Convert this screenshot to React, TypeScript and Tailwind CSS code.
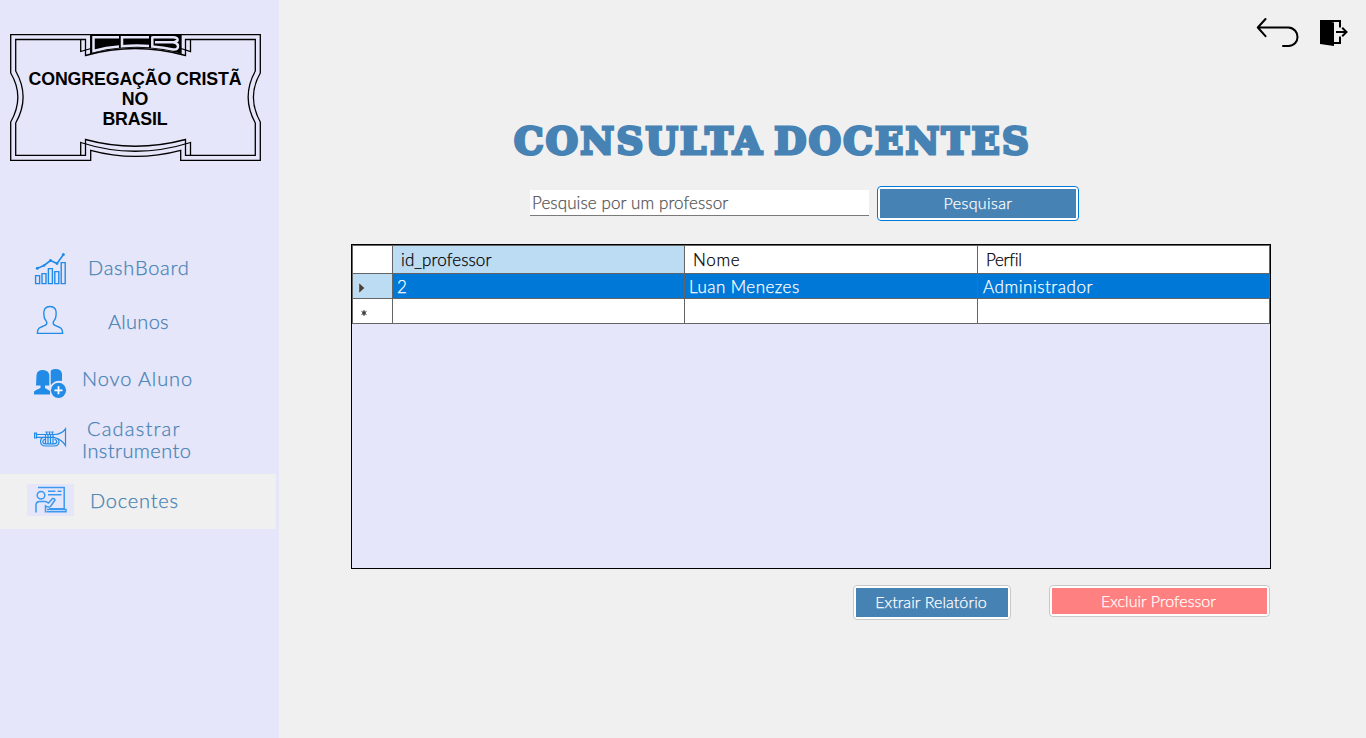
import type { ReactNode } from "react";

const thin = "font-['Lato'] font-light [-webkit-text-stroke:0.25px_currentColor]";

function Logo() {
  return (
    <svg width="279" height="170" viewBox="0 0 279 170" className="block shrink-0" fill="none" stroke="#000" strokeWidth="1.3">
      <path d="M91 34.7V53.5Q135 42 181 53.5V34.700Z" fill="#000" stroke="none" />
      <path d="M119 37.300H93.500V51Q106 47.300 119 46.500M149 37.300H122V46.300Q136 44.800 149 46M152.300 36.500V46.500Q164 47.500 173 49.500Q178.500 50 178 45.500Q177 42.500 173 42.300H155M152.300 37.300H173Q178.500 37.500 177.500 40.500L174 42.300" stroke="#e6e6fa" strokeWidth="2.500" />
      <path d="M10.700 34.700H260.300V73Q246.500 97 260.300 122V160.300H180.700V150.300Q135 162.500 90.700 150.300V160.300H10.700V122Q25 97 10.700 73Z" />
      <path d="M15.700 39.500H85.500V55.500Q135 41.500 185.500 55.500V39.500H255.300V71Q241 97 255.300 123V155.300H185.500V139.500Q135 153 85.500 139.500V155.300H15.700V123Q30.500 97 15.700 71Z" />
      <path d="M80.700 39.500V51.500L91 48.500M190.500 39.500V51.500L181 48.500M80.700 155.300V142.500Q135 160 190.500 142.500V155.300M90.700 35V54M181 35V54" />
      <g fill="#000" stroke="none" textAnchor="middle" fontFamily="Liberation Sans, Arial, sans-serif" fontWeight="700" fontSize="17.800">
        <text x="135" y="85" textLength="213">CONGREGAÇÃO CRISTÃ</text>
        <text x="135" y="105">NO</text>
        <text x="135" y="125" textLength="65">BRASIL</text>
      </g>
    </svg>
  );
}

function ChartIcon() {
  return (
    <svg width="34" height="34" viewBox="0 0 34 34" fill="none" stroke="#228be6" strokeWidth="1.400">
      <path d="M1.600 23.600h4v8h-4zM8 21.600h4v10H8zM14.400 16.600h4v15h-4zM20.800 19.600h4v12h-4zM27.200 10.600h4v21h-4z" />
      <path d="M3 16.500L10 13.500L16.500 8.500L23 11.500L29.500 2.500" strokeWidth="1.600" />
      <g fill="#228be6" stroke="none"><circle cx="3.300" cy="16.300" r="1.500" /><circle cx="10" cy="13.500" r="1.300" /><circle cx="16.500" cy="8.500" r="1.500" /><circle cx="23" cy="11.500" r="1.400" /><circle cx="29.300" cy="2.500" r="1.500" /></g>
    </svg>
  );
}

function PersonIcon() {
  return (
    <svg width="28" height="30" viewBox="0 0 28 30" fill="none" stroke="#228be6" strokeWidth="1.400" strokeLinejoin="round">
      <path d="M14 1.500C9.500 1.500 7.500 4.500 7.800 8.500L8.300 12.500C8.700 14.700 10.500 15.500 10.800 17.500C11 19.500 10.300 20 8.500 20.700C4.500 22.300 1.500 22.500 1.300 28.400H26.700C26.500 22.500 23.500 22.300 19.500 20.700C17.700 20 17 19.500 17.200 17.500C17.500 15.500 19.300 14.700 19.700 12.500L20.200 8.500C20.500 4.500 18.500 1.500 14 1.500Z" />
    </svg>
  );
}

function AddPeopleIcon() {
  return (
    <svg width="34" height="32" viewBox="0 0 34 32" fill="#228be6">
      <path d="M2 17.500L2.500 7Q3 2 9 2Q14.800 2.300 15.300 7V17.500H11V20L16 23V26.500H0V23.500Q2 21.500 6.500 20V17.500Z" />
      <path d="M16.700 14.500V4.500Q16 1 21.500 1Q27.500 1 28 6V13Q21 11.500 17 17Z" />
      <circle cx="24.500" cy="22.300" r="7.600" />
      <path d="M24.500 18.300V26.300M20.500 22.300H28.500" stroke="#fff" strokeWidth="1.800" />
    </svg>
  );
}

function TrumpetIcon() {
  return (
    <svg width="34" height="22" viewBox="0 0 34 22" fill="none" stroke="#228be6" strokeWidth="1.200">
      <path d="M.600 6.200H2.500V11H.600ZM2.500 7.500H20Q28 7 31.500 1.800V18.500Q28 12.500 20 10.300H2.500" />
      <path d="M10 10.300Q6.500 10.700 6.500 14.500Q6.700 19 11.500 19H20Q25 19 25 14.500Q25 12 23 11.300M11 12.300Q8.800 12.700 8.800 14.600Q9 16.800 11.500 16.900H20Q22.800 16.700 22.800 14.500Q22.500 12.500 20.500 12.300" />
      <path d="M11.500 7.500V16.900M14 7.500V16.900M16.500 7.500V16.900M19 7.500V16.900M12.700 5.500V7.500M15.500 5.500V7.500M18.300 5.500V7.500M11.300 5H13.800M14.300 5H16.800M17.300 5H19.800" />
    </svg>
  );
}

function TeacherIcon() {
  return (
    <svg width="32" height="28" viewBox="0 0 32 28" fill="none" stroke="#3b9af0" strokeWidth="1.500">
      <path d="M3 1.500H29.200V22.700H14M11.500 25.800H31V23.500H12" />
      <path d="M13 5.300H20.500M22.500 5.300H26.500M13 8.700H26.500" />
      <circle cx="6" cy="9.200" r="3.800" />
      <path d="M1 26.500V18.500Q1.300 15.500 4.500 15.400H10.500L13.500 17L17.500 12.500Q19.700 12.300 20 14L15.500 20.500Q14 22 10.500 19.800V26.500" />
    </svg>
  );
}

function BackIcon() {
  return (
    <svg width="44" height="32" viewBox="0 0 44 32" fill="none" stroke="#000" strokeWidth="2" strokeLinecap="round" strokeLinejoin="round">
      <path d="M9.500 2L1.800 10.500L9.500 19.200M2 10.500H32.500C44.500 11.500 44.500 28.500 32.500 29H27" />
    </svg>
  );
}

function ExitIcon() {
  return (
    <svg width="30" height="28" viewBox="0 0 30 28" fill="none" stroke="#000" strokeWidth="2">
      <path d="M1 1L15 3.500V27L1 25Z" fill="#000" stroke="none" />
      <path d="M1 2H21V8.500M21 17.500V24H15M17 13H27M23.200 8.700L27.500 13L23.200 17.300" />
    </svg>
  );
}

function NavItem({ icon, iconClass, label, labelClass, className }: { icon: ReactNode; iconClass: string; label: ReactNode; labelClass: string; className: string }) {
  return (
    <button className={`flex items-start text-left text-[20px] leading-[22px] text-[#4682b4] ${className}`}>
      <span className={`shrink-0 ${iconClass}`}>{icon}</span>
      <span className={`${thin} whitespace-nowrap ${labelClass}`}>{label}</span>
    </button>
  );
}

function Button({ children, className }: { children: ReactNode; className: string }) {
  return (
    <button className={`flex shrink-0 whitespace-nowrap rounded-[4px] border bg-white p-[2px] ${className}`}>{children}</button>
  );
}

export default function App() {
  return (
    <div className="flex h-[738px] w-[1366px] overflow-hidden bg-[#f0f0f0] font-['Lato',sans-serif]">
      <aside className="flex w-[279px] shrink-0 flex-col bg-[#e6e6fa]">
        <Logo />
        <nav className="mt-[71px] flex w-[276px] flex-col">
          <NavItem className="h-[55px]" icon={<ChartIcon />} iconClass="w-[53px] pl-[34px] pt-[11px]" label="DashBoard" labelClass="pl-[35px] pt-[15px] tracking-[0.75px]" />
          <NavItem className="h-[54px]" icon={<PersonIcon />} iconClass="w-[64px] pl-[36px] pt-[9px]" label="Alunos" labelClass="pl-[44px] pt-[14px] tracking-[0.3px]" />
          <NavItem className="h-[59px]" icon={<AddPeopleIcon />} iconClass="w-[68px] pl-[34px] pt-[18px]" label="Novo Aluno" labelClass="pl-[14px] pt-[17px] tracking-[0.9px]" />
          <NavItem className="h-[65px]" icon={<TrumpetIcon />} iconClass="w-[68px] pl-[34px] pt-[18px]"
            label={<><span className="block pl-[5px] tracking-[1.2px]">Cadastrar</span><span className="block tracking-[0.4px]">Instrumento</span></>} labelClass="pl-[14px] pt-[8px]" />
          <NavItem className="h-[55px] bg-[#f0f0f0]" icon={<span className="flex h-8 w-[47px] bg-[#e6e6fa] pl-2 pt-[2px]"><TeacherIcon /></span>} iconClass="pl-[27px] pt-[10px]" label="Docentes" labelClass="pl-[16px] pt-[15px] tracking-[0.8px]" />
        </nav>
      </aside>

      <main className="flex flex-1 flex-col">
        <div className="flex h-[116px] items-start justify-end pr-[17px] pt-[17px]">
          <button className="mr-[19px]"><BackIcon /></button>
          <button className="pt-[2px]"><ExitIcon /></button>
        </div>

        <h1 className="h-[50px] whitespace-nowrap pl-[235px] font-['DejaVu_Serif',serif] text-[37px] font-bold leading-[50px] tracking-[2.3px] [word-spacing:-5px] text-[#4682b4] [-webkit-text-stroke:3px_#4682b4] [paint-order:stroke_fill]">CONSULTA DOCENTES</h1>

        <div className="mt-[20px] flex h-[35px] items-start pl-[251px]">
          <input placeholder="Pesquise por um professor" className={`${thin} mr-[8px] mt-[4px] h-[26px] w-[339px] border-b border-[#7a7a7a] bg-white pl-[2px] text-[17px] tracking-[0.1px] text-[#555] outline-none placeholder:text-[#555] placeholder:opacity-100`} />
          <Button className="h-[35px] w-[202px] border-[#0078d7]">
            <span className={`${thin} flex h-full w-full items-center justify-center bg-[#4682b4] pb-[2px] text-[16px] tracking-[0.4px] text-white`}>Pesquisar</span>
          </Button>
        </div>

        <section className="ml-[72px] mt-[23px] h-[325px] w-[920px] border border-black bg-[#e6e6fa]">
          <div className={`${thin} grid grid-cols-[40px_292px_293px_292px] grid-rows-[28px_25px_25px] border-l border-t border-[#646464] text-[17px] leading-[24px] text-black *:border-b *:border-r *:border-[#646464]`}>
            <div className="bg-white" />
            <div className="bg-[#bcdcf4] pl-[8px] pt-[2px] tracking-[0.1px]">id_professor</div>
            <div className="bg-white pl-[8px] pt-[2px] tracking-[0.7px]">Nome</div>
            <div className="bg-white pl-[8px] pt-[2px] tracking-[-0.3px]">Perfil</div>
            <div className="flex items-center bg-[#bcdcf4] pl-[5px] pt-[3px]">
              <svg width="8" height="12" viewBox="0 0 8 12"><path d="M.800 .500L6.800 6L.800 11.500Z" fill="#404040" stroke="#fff" strokeWidth=".6" /></svg>
            </div>
            <div className="bg-[#0078d7] pl-[4px] pt-px text-white">2</div>
            <div className="bg-[#0078d7] pl-[4px] pt-px tracking-[0.450px] text-white">Luan Menezes</div>
            <div className="bg-[#0078d7] pl-[5px] pt-px tracking-[0.550px] text-white">Administrador</div>
            <div className="flex items-center bg-white pl-[7px] pt-[3px]">
              <svg width="8" height="8" viewBox="0 0 8 8"><circle cx="4" cy="4" r="1.800" fill="#404040" /><path d="M4 1V7M1.500 2.300L6.500 5.700M6.500 2.300L1.500 5.700" stroke="#404040" strokeWidth="1" /></svg>
            </div>
            <div className="bg-white" />
            <div className="bg-white" />
            <div className="bg-white" />
          </div>
        </section>

        <div className="mt-[16px] flex items-start gap-[38px] pl-[574px]">
          <Button className="h-[35px] w-[158px] border-[#c8c8c8]">
            <span className={`${thin} flex h-full w-full items-center justify-center bg-[#4682b4] pb-[2px] pr-[2px] text-[16px] tracking-[0.100px] text-white`}>Extrair Relatório</span>
          </Button>
          <Button className="h-[32px] w-[221px] border-[#c8c8c8]">
            <span className={`${thin} flex h-full w-full items-center justify-center bg-[#ff8080] pr-[2px] text-[16px] tracking-[0.050px] text-white`}>Excluir Professor</span>
          </Button>
        </div>
      </main>
    </div>
  );
}
